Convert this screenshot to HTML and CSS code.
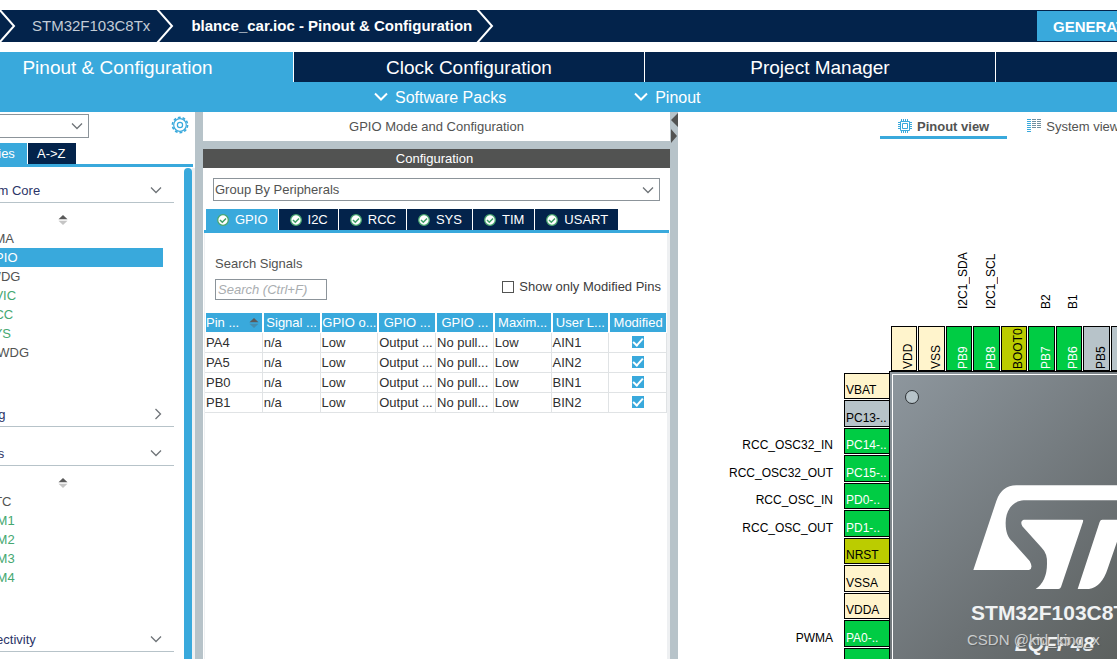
FILE: index.html
```html
<!DOCTYPE html>
<html lang="en">
<head>
<meta charset="utf-8">
<title>blance_car.ioc - Pinout &amp; Configuration</title>
<link rel="stylesheet" href="styles.css">
</head>
<body>
<svg class="defs" aria-hidden="true">
  <symbol id="ok" viewBox="0 0 12 12"><circle cx="6" cy="6" r="5.3" fill="#fff" stroke="#4aa870" stroke-width="1.3"/><path d="M3 6l2.3 2.2L9 4.4" fill="none" stroke="#3fa066" stroke-width="1.5"/></symbol>
  <symbol id="down" viewBox="0 0 12 8"><path d="M1 1.5l5 5 5-5" fill="none" stroke="#6f7478" stroke-width="1.3"/></symbol>
  <symbol id="right" viewBox="0 0 8 12"><path d="M1.5 1l5 5-5 5" fill="none" stroke="#6f7478" stroke-width="1.3"/></symbol>
  <symbol id="sort" viewBox="0 0 10 12"><path d="M0.5 5.2L5 1l4.500 4.200z" fill="#5a5a5a"/><path d="M0.500 6.800L5 11l4.500-4.200z" fill="#5a5a5a" opacity=".35"/></symbol>
  <symbol id="crumb" viewBox="0 0 18 32"><path d="M1 -1L16 16L1 33" fill="none" stroke="#fff" stroke-width="2"/></symbol>
</svg>
<div class="app">
  <header class="topbar">
    <nav class="crumbs">
      <svg class="crumb-arrow first" aria-hidden="true"><use href="#crumb"/></svg>
      <a class="crumb" href="#">STM32F103C8Tx</a>
      <svg class="crumb-arrow" aria-hidden="true"><use href="#crumb"/></svg>
      <a class="crumb current" href="#">blance_car.ioc - Pinout &amp; Configuration</a>
      <svg class="crumb-arrow" aria-hidden="true"><use href="#crumb"/></svg>
    </nav>
    <button class="generate" type="button">GENERATE CODE</button>
  </header>

  <nav class="main-tabs">
    <button class="main-tab active" type="button">Pinout &amp; Configuration</button>
    <button class="main-tab" type="button">Clock Configuration</button>
    <button class="main-tab" type="button">Project Manager</button>
    <span class="main-tab"></span>
  </nav>
  <div class="toolbar">
    <button class="tool" type="button"><svg width="14" height="10" viewBox="0 0 14 10" aria-hidden="true"><path d="M1 1.5l6 6 6-6" fill="none" stroke="#fff" stroke-width="2"/></svg>Software Packs</button>
    <button class="tool" type="button"><svg width="14" height="10" viewBox="0 0 14 10" aria-hidden="true"><path d="M1 1.5l6 6 6-6" fill="none" stroke="#fff" stroke-width="2"/></svg>Pinout</button>
  </div>

  <main class="workspace">
    <aside class="sidebar">
      <div class="side-search">
        <select class="combo side-combo" aria-label="Search"><option></option></select>
        <button class="gear" type="button" aria-label="Settings"><svg width="18" height="18" viewBox="0 0 18 18" aria-hidden="true"><g fill="none" stroke="#39a9dc"><circle cx="9" cy="9" r="6.3" stroke-width="1.2"/><circle cx="9" cy="9" r="7.6" stroke-width="1.6" stroke-dasharray="2.8 1.98"/><circle cx="9" cy="9" r="2.6" stroke-width="1.2"/></g></svg></button>
      </div>
      <div class="tabs side-tabs">
        <button class="tab side-tab active" type="button">Categories</button>
        <button class="tab side-tab" type="button">A-&gt;Z</button>
      </div>
      <div class="side-scroll">
        <div class="tree">
          <section class="group open">
            <button class="group-head" type="button">System Core<svg width="12" height="8" aria-hidden="true"><use href="#down"/></svg></button>
            <div class="sort-row"><svg width="10" height="12" aria-hidden="true"><use href="#sort"/></svg></div>
            <ul class="items">
              <li>DMA</li>
              <li class="selected">GPIO</li>
              <li>IWDG</li>
              <li class="on">NVIC</li>
              <li class="on">RCC</li>
              <li class="on">SYS</li>
              <li>WWDG</li>
            </ul>
          </section>
          <section class="group">
            <button class="group-head" type="button">Analog<svg width="8" height="12" aria-hidden="true"><use href="#right"/></svg></button>
          </section>
          <section class="group open">
            <button class="group-head" type="button">Timers<svg width="12" height="8" aria-hidden="true"><use href="#down"/></svg></button>
            <div class="sort-row"><svg width="10" height="12" aria-hidden="true"><use href="#sort"/></svg></div>
            <ul class="items">
              <li>RTC</li>
              <li class="on">TIM1</li>
              <li class="on">TIM2</li>
              <li class="on">TIM3</li>
              <li class="on">TIM4</li>
            </ul>
          </section>
          <section class="group">
            <button class="group-head" type="button">Connectivity<svg width="12" height="8" aria-hidden="true"><use href="#down"/></svg></button>
          </section>
        </div>
        <div class="scroll-thumb"></div>
      </div>
    </aside>
    <div class="splitter"></div>

    <section class="config">
      <h1 class="config-title">GPIO Mode and Configuration</h1>
      <h2 class="config-sub">Configuration</h2>
      <div class="config-body">
        <select class="combo group-combo" aria-label="Group by"><option>Group By Peripherals</option></select>
        <div class="tabs signal-tabs">
          <button class="tab active" type="button"><svg width="12" height="12" aria-hidden="true"><use href="#ok"/></svg>GPIO</button>
          <button class="tab" type="button"><svg width="12" height="12" aria-hidden="true"><use href="#ok"/></svg>I2C</button>
          <button class="tab" type="button"><svg width="12" height="12" aria-hidden="true"><use href="#ok"/></svg>RCC</button>
          <button class="tab" type="button"><svg width="12" height="12" aria-hidden="true"><use href="#ok"/></svg>SYS</button>
          <button class="tab" type="button"><svg width="12" height="12" aria-hidden="true"><use href="#ok"/></svg>TIM</button>
          <button class="tab" type="button"><svg width="12" height="12" aria-hidden="true"><use href="#ok"/></svg>USART</button>
        </div>
        <div class="tab-page">
          <div class="filter">
            <div class="search">
              <label for="sig">Search Signals</label>
              <input id="sig" class="search-box" type="text" placeholder="Search (Ctrl+F)">
            </div>
            <label class="only"><input class="check plain" type="checkbox">Show only Modified Pins</label>
          </div>
          <table class="pins-table">
            <thead>
              <tr><th class="sorted"><span>Pin ...</span><svg width="10" height="12" aria-hidden="true"><use href="#sort"/></svg></th><th>Signal ...</th><th>GPIO o...</th><th>GPIO ...</th><th>GPIO ...</th><th>Maxim...</th><th>User L...</th><th>Modified</th></tr>
            </thead>
            <tbody>
              <tr><td>PA4</td><td>n/a</td><td>Low</td><td>Output ...</td><td>No pull...</td><td>Low</td><td>AIN1</td><td class="mod"><input class="check" type="checkbox" aria-label="PA4 modified" checked></td></tr>
              <tr><td>PA5</td><td>n/a</td><td>Low</td><td>Output ...</td><td>No pull...</td><td>Low</td><td>AIN2</td><td class="mod"><input class="check" type="checkbox" aria-label="PA5 modified" checked></td></tr>
              <tr><td>PB0</td><td>n/a</td><td>Low</td><td>Output ...</td><td>No pull...</td><td>Low</td><td>BIN1</td><td class="mod"><input class="check" type="checkbox" aria-label="PB0 modified" checked></td></tr>
              <tr><td>PB1</td><td>n/a</td><td>Low</td><td>Output ...</td><td>No pull...</td><td>Low</td><td>BIN2</td><td class="mod"><input class="check" type="checkbox" aria-label="PB1 modified" checked></td></tr>
            </tbody>
          </table>
        </div>
      </div>
    </section>
    <div class="splitter"><svg width="8" height="32" viewBox="0 0 8 32" aria-hidden="true"><path d="M8 1v14L1 8zM1 17v14l6-7z" fill="#525352"/></svg></div>

    <section class="pinout">
      <div class="views">
        <button class="view active" type="button"><svg width="14" height="14" viewBox="0 0 14 14" aria-hidden="true"><g fill="none" stroke="#39a9dc"><path d="M2.5 2.5h9v9h-9z"/><path d="M4.5 4.5h5v5h-5z"/><path d="M3.5 0v2M5.5 0v2M7.5 0v2M9.5 0v2M3.5 12v2M5.5 12v2M7.5 12v2M9.5 12v2M0 3.5h2M0 5.5h2M0 7.5h2M0 9.5h2M12 3.5h2M12 5.5h2M12 7.5h2M12 9.5h2"/></g></svg>Pinout view</button>
        <button class="view" type="button"><svg width="14" height="14" viewBox="0 0 14 14" aria-hidden="true"><g fill="none" stroke-dasharray="1 1"><path d="M2 0v14" stroke="#39a9dc" stroke-width="4"/><path d="M7 0v10M12 0v10" stroke="#6f8fa0" stroke-width="4"/></g></svg>System view</button>
      </div>
      <div class="canvas">
        <div class="top-side">
          <div class="labels-top"><span></span><span></span><span>I2C1_SDA</span><span>I2C1_SCL</span><span></span><span>B2</span><span>B1</span><span></span><span></span></div>
          <div class="pins-top">
            <span class="pin power">VDD</span><span class="pin power">VSS</span><span class="pin used">PB9</span><span class="pin used">PB8</span><span class="pin boot">BOOT0</span><span class="pin used">PB7</span><span class="pin used">PB6</span><span class="pin free">PB5</span><span class="pin free"></span>
          </div>
        </div>
        <div class="left-side">
          <div class="labels-left"><span></span><span></span><span>RCC_OSC32_IN</span><span>RCC_OSC32_OUT</span><span>RCC_OSC_IN</span><span>RCC_OSC_OUT</span><span></span><span></span><span></span><span>PWMA</span><span></span></div>
          <div class="pins-left">
            <span class="pin power">VBAT</span><span class="pin free">PC13-..</span><span class="pin used">PC14-..</span><span class="pin used">PC15-..</span><span class="pin used">PD0-..</span><span class="pin used">PD1-..</span><span class="pin boot">NRST</span><span class="pin power">VSSA</span><span class="pin power">VDDA</span><span class="pin used">PA0-..</span><span class="pin used"></span>
          </div>
        </div>
        <div class="chip">
          <span class="dot"></span>
          <svg class="logo" width="163" height="105" viewBox="170 74 489 315" aria-hidden="true"><g fill="#fff"><path d="M171 329L240 122Q256 75 300 75H657L642 120H322C285 122 267 155 268 190C268 215 275 232 290 246L340 302Q352 324 338 329Z"/><path d="M322 178H498Q502 178 500 184L434 380Q432 386 426 386H358Q392 362 392 310Q394 280 376 262L318 198Q310 182 322 178Z"/><path d="M558 178H625L574 325Q556 380 518 386H484L550 185Q552 178 558 178Z"/></g></svg>
          <span class="chip-name">STM32F103C8Tx</span>
          <span class="chip-pkg">LQFP48</span>
        </div>
        <span class="watermark">CSDN @kid_king_x</span>
      </div>
    </section>
  </main>
</div>
</body>
</html>
```
FILE: styles.css
```css
* { box-sizing: border-box; }

body {
  margin: 0;
  overflow: hidden;
  background: #fff;
  color: #525352;
  font: 13px/19px "Liberation Sans", Arial, sans-serif;
}

button, input, select { margin: 0; padding: 0; border: 0; border-radius: 0; font: inherit; color: inherit; background: none; }
.defs { position: absolute; width: 0; height: 0; }
svg { display: block; flex: none; }

.app { display: flex; flex-direction: column; height: 100vh; padding-top: 10px; }

/* breadcrumb */
.topbar { display: flex; justify-content: space-between; height: 32px; flex: none; background: #03234b; overflow: hidden; }
.crumbs { display: flex; align-items: center; }
.crumb-arrow { width: 18px; height: 32px; }
.crumb-arrow.first { margin-left: -2px; }
.crumb { padding: 0 6px 2px 16px; font-size: 15px; color: #c3ccd6; text-decoration: none; white-space: nowrap; }
.crumb.current { padding: 0 4px 2px 17px; font-weight: bold; color: #fff; }
.generate { width: 80px; margin: 1px 0; padding-left: 16px; background: #39a9dc; color: #fff; font-size: 15px; font-weight: bold; text-align: left; white-space: nowrap; overflow: hidden; }

/* main tabs */
.main-tabs { display: grid; grid-template-columns: 293fr 350fr 350fr 121fr; gap: 1px; height: 30px; margin-top: 10px; flex: none; background: #fff; }
.main-tab { padding-top: 2px; background: #03234b; color: #fff; font-size: 19px; line-height: 28px; }
.main-tab.active { padding-right: 58px; background: #39a9dc; }
.toolbar { display: flex; gap: 128px; height: 30px; flex: none; padding-left: 374px; background: #39a9dc; color: #fff; }
.tool { display: flex; align-items: center; gap: 7px; font-size: 16px; }

.workspace { display: grid; grid-template-columns: 195px 8px minmax(0, 467fr) 8px minmax(0, 439fr); flex: 1; min-height: 0; }
.splitter { background: #b7c3c9; }

.combo {
  appearance: none;
  border: 1px solid #8c949a;
  background: #fff url("data:image/svg+xml,%3Csvg xmlns='http://www.w3.org/2000/svg' width='12' height='8'%3E%3Cpath d='M1 1.5l5 5 5-5' fill='none' stroke='%236f7478' stroke-width='1.3'/%3E%3C/svg%3E") no-repeat right 5px center;
}

/* sidebar */
.sidebar { display: flex; flex-direction: column; min-height: 0; margin-left: -60px; }
.side-search { display: flex; align-items: center; justify-content: space-between; height: 26px; padding: 2px 6px 0 0; }
.side-combo { width: 149px; height: 24px; }
.gear { padding-bottom: 2px; }
.tabs { display: flex; gap: 1px; border-bottom: 3px solid #39a9dc; }
.tab { display: flex; align-items: center; gap: 6px; height: 21px; padding: 0 10px 0 11px; background: #03234b; color: #fff; }
.tab.active { background: #39a9dc; }
.side-tabs { margin: 5px 2px 0 0; }
.side-tab { padding: 0 10px 0 9px; }
.side-tab.active { width: 87px; padding: 0 12px; }
.side-scroll { display: flex; justify-content: space-between; flex: 1; min-height: 0; margin-top: 1px; border-right: 3px solid #eef0f2; }
.tree { width: 234px; padding-top: 10px; overflow: hidden; }
.scroll-thumb { width: 8px; border-radius: 4px 4px 0 0; background: #39a9dc; }
.group { padding-bottom: 14px; }
.group.open { padding-bottom: 40px; }
.group-head { display: flex; align-items: center; justify-content: space-between; width: 100%; height: 25px; padding: 0 12px 0 25px; border-bottom: 1px solid #b7c3c9; color: #2b3467; }
.sort-row { display: flex; height: 26px; padding: 11px 0 0 118px; }
.items { margin: 0; padding: 0 11px 0 0; list-style: none; }
.items li { padding-left: 45px; }
.items .on { color: #45a871; }
.items .selected { background: #39a9dc; color: #fff; }

/* configuration panel */
.config { display: flex; flex-direction: column; min-width: 0; }
.config-title { margin: 0; border-bottom: 8px solid #b7c3c9; font-size: 13px; font-weight: normal; line-height: 29px; text-align: center; }
.config-sub { margin: 0; padding-right: 4px; background: #525352; color: #fff; font-size: 13px; font-weight: normal; line-height: 19px; text-align: center; }
.config-body { display: flex; flex-direction: column; flex: 1; padding: 10px 0 0 1px; }
.group-combo { height: 23px; margin: 0 10px 8px 9px; padding-left: 1px; }
.signal-tabs { margin-right: 1px; padding-left: 2px; }
.tab-page { flex: 1; border-left: 1px solid #eef0f2; border-right: 3px solid #eef0f2; }
.filter { display: flex; align-items: flex-end; justify-content: space-between; padding: 21px 6px 13px 10px; }
.search { display: flex; flex-direction: column; gap: 6px; }
.search-box { width: 112px; height: 21px; padding: 0 2px; border: 1px solid #8c949a; }
.search-box::placeholder { color: #a9adb0; font-style: italic; opacity: 1; }
.only { display: flex; align-items: center; gap: 5px; margin-bottom: 4px; color: #3c3c3c; }
.check { appearance: none; display: grid; place-items: center; width: 12px; height: 12px; background: #39a9dc; }
.check:checked::after { content: ""; width: 4px; height: 8px; margin-bottom: 2px; border: solid #fff; border-width: 0 2px 2px 0; transform: rotate(42deg); }
.check.plain { border: 1px solid #525352; background: #fff; }

.pins-table { width: 100%; table-layout: fixed; border-collapse: separate; border-spacing: 0; color: #2f2f2f; white-space: nowrap; }
.pins-table th { height: 20px; padding: 0; overflow: hidden; border: 1px solid #fff; border-top: 0; background: #39a9dc; color: #fff; font-weight: normal; line-height: 19px; }
.pins-table .sorted { display: flex; align-items: center; justify-content: space-between; padding: 0 3px 0 0; }
.pins-table td { height: 20px; padding: 0 0 0 1px; overflow: hidden; border: solid #e0e3e5; border-width: 0 1px 1px 0; }
.pins-table .mod { padding-bottom: 1px; }
.pins-table .mod .check { margin: 0 auto; }

/* pinout */
.pinout { display: flex; flex-direction: column; min-width: 0; min-height: 0; overflow: hidden; }
.views { display: flex; gap: 2px; height: 27px; padding-left: 202px; }
.view { display: flex; align-items: center; gap: 5px; padding: 4px 18px 0; border-bottom: 3px solid transparent; white-space: nowrap; }
.view.active { border-color: #39a9dc; font-weight: bold; }

.canvas { position: relative; flex: 1; min-height: 0; overflow: hidden; color: #000; font-size: 12px; line-height: 14px; }
.top-side { position: absolute; left: 213px; top: 90px; }
.labels-top, .pins-top { display: grid; grid-auto-flow: column; grid-auto-columns: 26px 27px; gap: 1px; }
.labels-top { height: 80px; }
.pins-top { height: 62px; padding-top: 17px; }
.labels-top span, .pins-top .pin { display: flex; flex-direction: column; justify-content: flex-end; align-items: flex-start; writing-mode: vertical-rl; transform: rotate(180deg); }
.labels-top span { padding-left: 2px; }
.pins-top .pin { padding: 1px 0 0 1px; }
.left-side { position: absolute; left: 40px; top: 234px; display: flex; gap: 11px; }
.labels-left, .pins-left { display: grid; grid-auto-rows: 26px 27px; gap: 1px; }
.labels-left { width: 115px; text-align: right; }
.labels-left span, .pins-left .pin { display: flex; align-items: flex-end; }
.labels-left span { justify-content: flex-end; padding-bottom: 2px; }
.pins-left { width: 46px; }
.pin { border: 1px solid #000; color: #000; white-space: nowrap; }
.pins-left .pin { padding: 0 0 1px 1px; }
.pin.power { background: #fff4cc; }
.pin.used { background: #00cc44; color: #fff; }
.pin.boot { background: #bbcc00; }
.pin.free { background: #b7c3c9; }
.chip {
  position: absolute;
  left: 211px;
  top: 232px;
  width: 334px;
  height: 334px;
  display: flex;
  flex-direction: column;
  align-items: center;
  padding-right: 3px;
  border: 1px solid #000;
  outline: 1px solid #fff;
  outline-offset: -4px;
  background: linear-gradient(135deg, #8e979e, #6c7275 50%, #4f524c);
  color: #f0f2f3;
  font-size: 21px;
  font-weight: bold;
  line-height: 31px;
}
.dot { align-self: flex-start; width: 14px; height: 14px; margin: 18px 0 0 15px; border: 1px solid #2c3033; border-radius: 7px; background: #b7c3c9; }
.logo { margin: 81px 0 7px; }
.chip-pkg { font-style: italic; }
.watermark { position: absolute; left: 289px; top: 491px; color: #c9cccd; font: 15px/20px "Liberation Sans", Arial, sans-serif; text-shadow: 1px 1px 1px #55595a; }
```
